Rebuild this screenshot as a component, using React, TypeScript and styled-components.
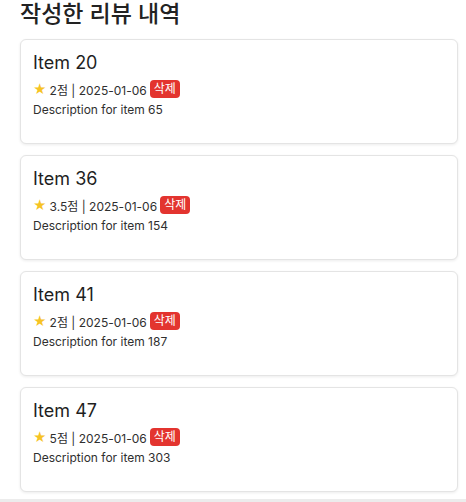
import React from "react";
import styled, { createGlobalStyle } from "styled-components";

interface Review {
   id: number;
   title: string;
   rating: string;
   date: string;
   description: string;
}

const reviews: Review[] = [
   { id: 1, title: "Item 20", rating: "2", date: "2025-01-06", description: "Description for item 65" },
   { id: 2, title: "Item 36", rating: "3.5", date: "2025-01-06", description: "Description for item 154" },
   { id: 3, title: "Item 41", rating: "2", date: "2025-01-06", description: "Description for item 187" },
   { id: 4, title: "Item 47", rating: "5", date: "2025-01-06", description: "Description for item 303" },
];

const GlobalStyle = createGlobalStyle`
   body {
      margin: 0;
      background: #ffffff;
      font-family: Inter, "Noto Sans CJK KR", sans-serif;
      color: #222;
   }
`;

const App: React.FC = () => {
   return (
      <>
         <GlobalStyle />
         <Page>
            <Heading>작성한 리뷰 내역</Heading>
            <List>
               {reviews.map((r) => (
                  <Card key={r.id}>
                     <Title>{r.title}</Title>
                     <Meta>
                        <Star>★</Star>
                        <span>
                           {r.rating}점 | {r.date}
                        </span>
                        <DeleteButton>삭제</DeleteButton>
                     </Meta>
                     <Description>{r.description}</Description>
                  </Card>
               ))}
            </List>
         </Page>
         <BottomBar />
      </>
   );
};

export default App;

const Page = styled.div`
   padding: 0 8px 0 20px;
   height: 499px;
   overflow: hidden;
`;

const Heading = styled.h2`
   margin: 0 0 11px;
   font-size: 23px;
   line-height: 28px;
   font-weight: 500;
   color: #222;
`;

const List = styled.div`
   display: flex;
   flex-direction: column;
   gap: 11px;
`;

const Card = styled.div`
   border: 1px solid #e4e4e4;
   border-radius: 6px;
   box-shadow: 0 1px 3px rgba(0, 0, 0, 0.08);
   padding: 10px 12px 24px;
   background: #fff;
`;

const Title = styled.div`
   font-size: 18px;
   line-height: 26px;
   font-weight: 400;
   color: #1f1f1f;
`;

const Meta = styled.div`
   display: flex;
   align-items: center;
   gap: 3px;
   margin-top: 3px;
   height: 20px;
   font-size: 12px;
   color: #2f2f2f;
`;

const Star = styled.span`
   color: #f6c324;
   font-size: 13px;
`;

const DeleteButton = styled.span`
   background: #e3342f;
   color: #fff;
   font-size: 12px;
   line-height: 18px;
   padding: 0 4px;
   border-radius: 4px;
`;

const Description = styled.div`
   margin-top: 2px;
   font-size: 12px;
   line-height: 18px;
   color: #2f2f2f;
`;

const BottomBar = styled.div`
   height: 3px;
   background: #ececec;
`;
